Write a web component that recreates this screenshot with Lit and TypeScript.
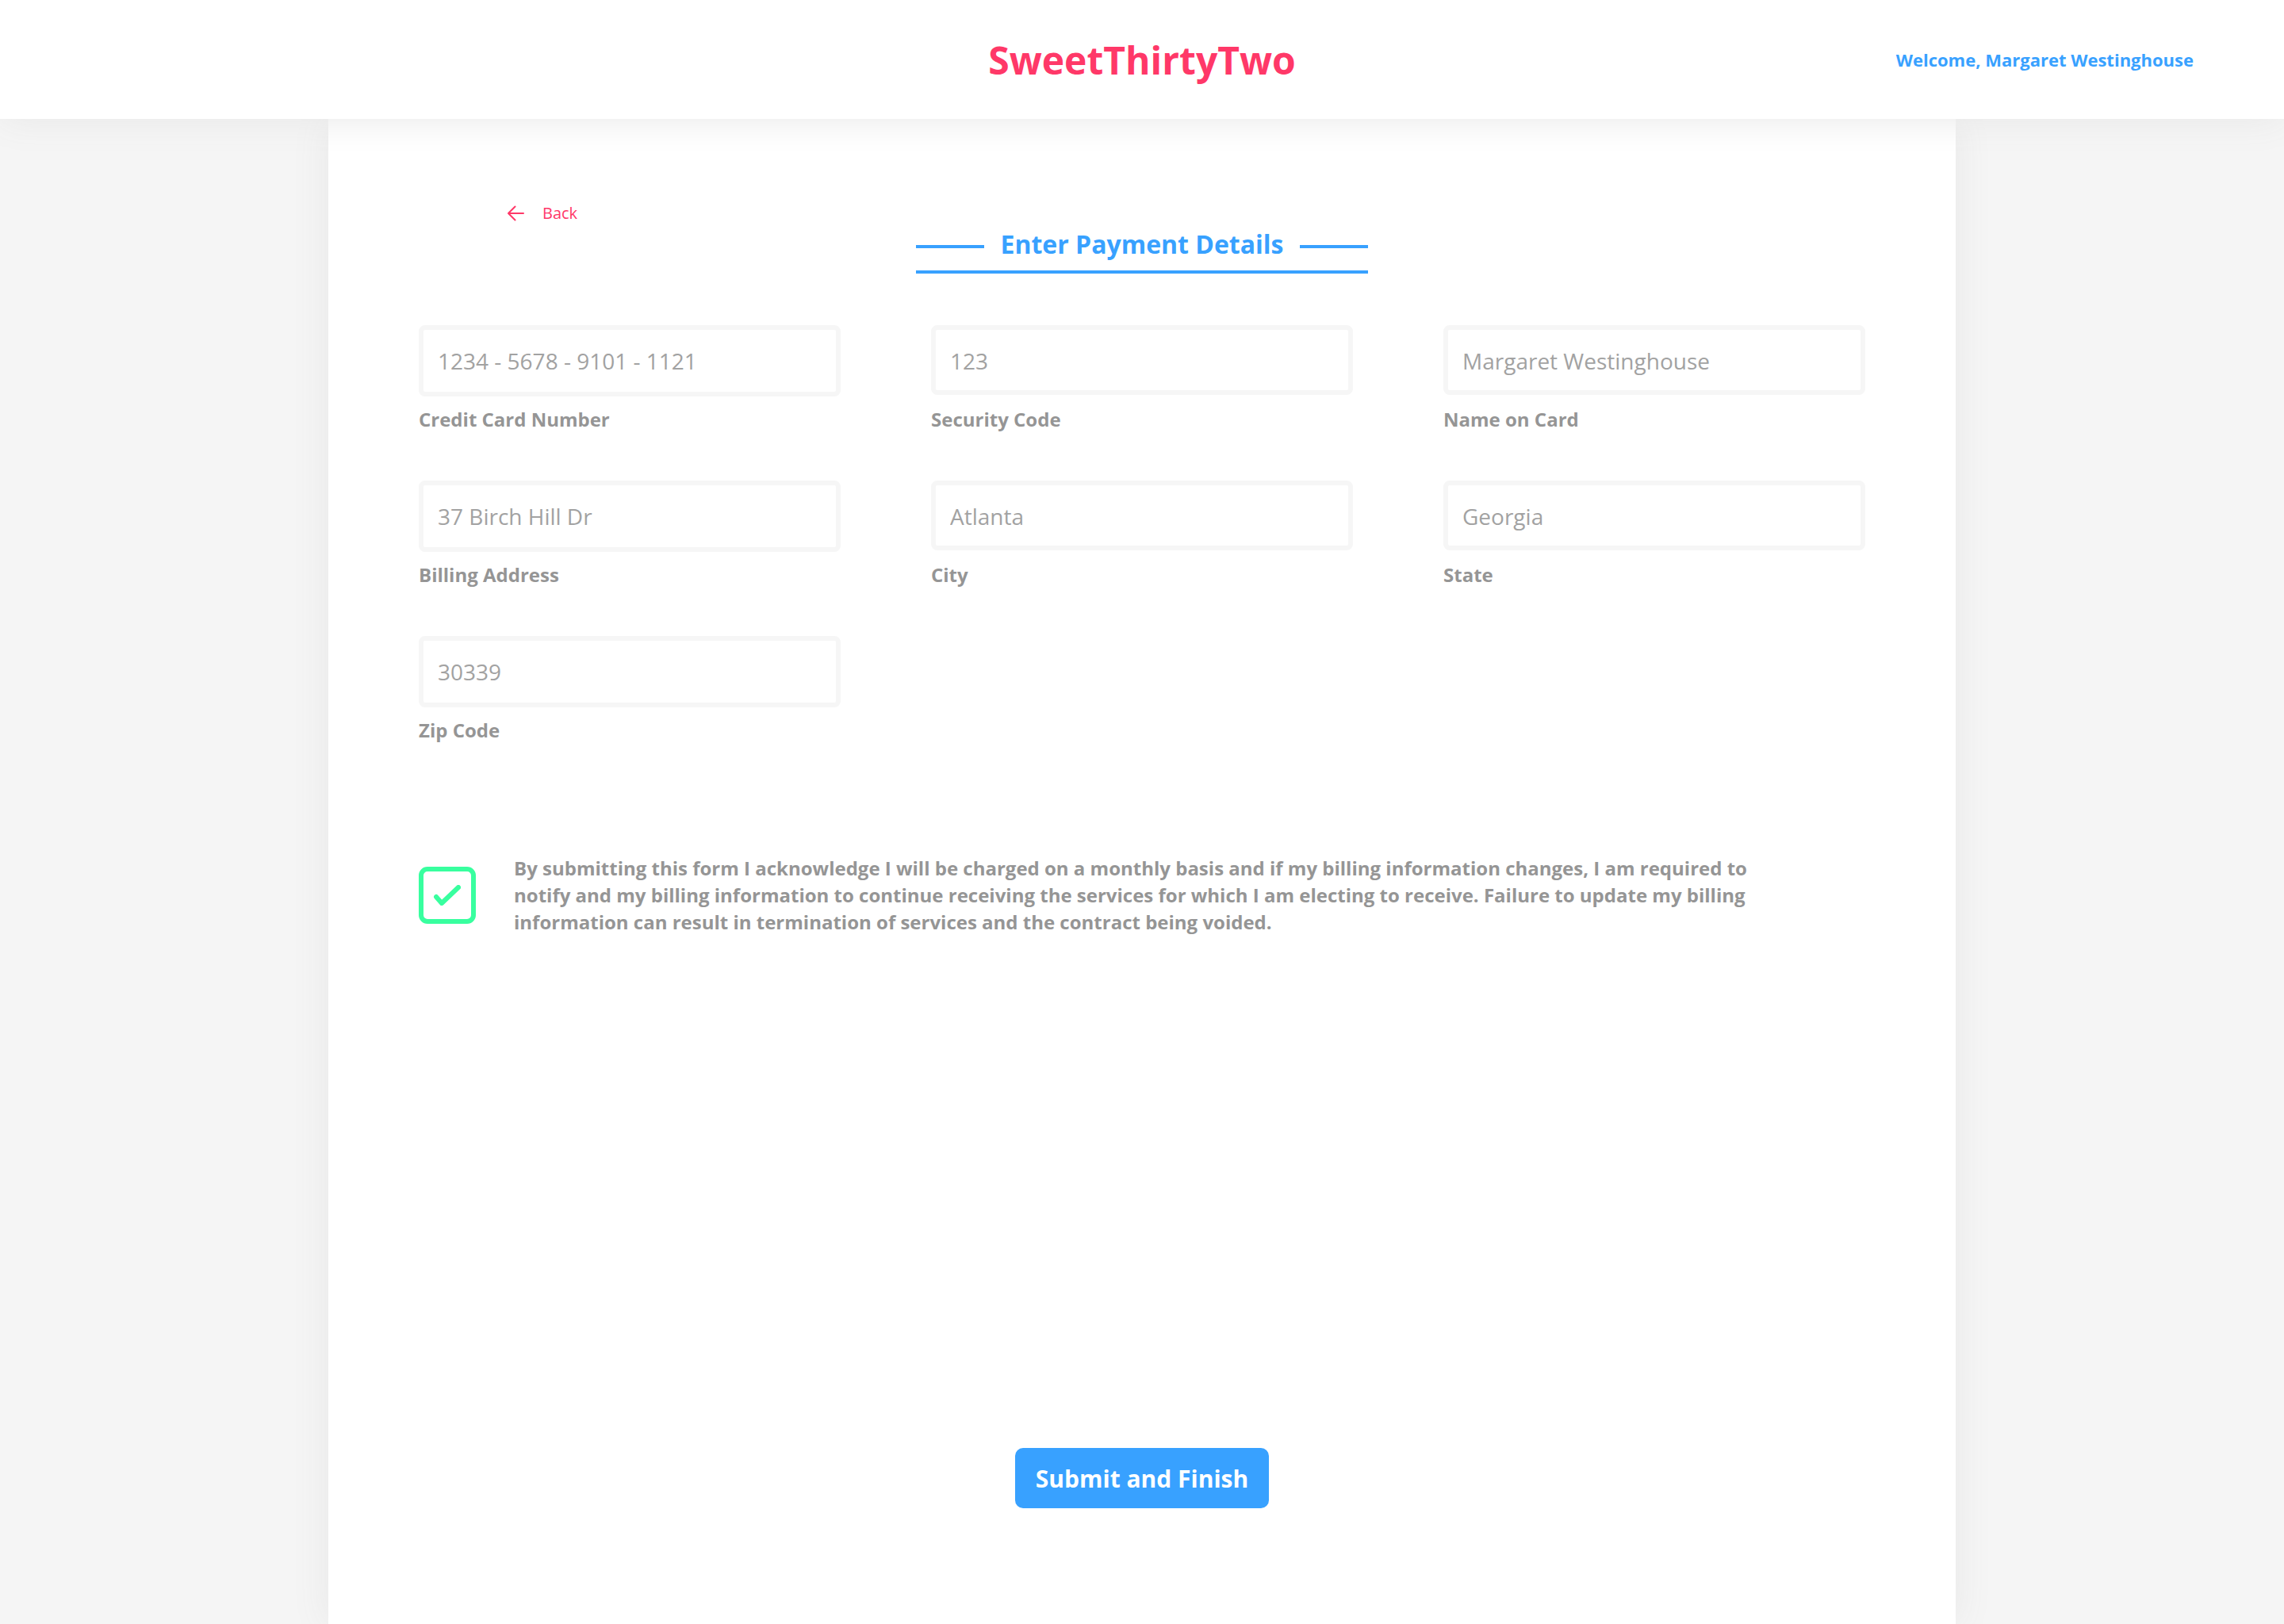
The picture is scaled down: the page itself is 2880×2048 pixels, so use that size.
import { LitElement, html, css, svg } from "lit";
import { customElement, state } from "lit/decorators.js";

interface Field {
  id: string;
  label: string;
  value: string;
}

const FIELDS: Field[] = [
  { id: "card-number", label: "Credit Card Number", value: "1234 - 5678 - 9101 - 1121" },
  { id: "security-code", label: "Security Code", value: "123" },
  { id: "card-name", label: "Name on Card", value: "Margaret Westinghouse" },
  { id: "address", label: "Billing Address", value: "37 Birch Hill Dr" },
  { id: "city", label: "City", value: "Atlanta" },
  { id: "state", label: "State", value: "Georgia" },
  { id: "zip", label: "Zip Code", value: "30339" },
];

const arrowShape = svg`<path d="M20 10H1.500M9.500 1.500L1 10L9.500 18.500" />`;
const checkShape = svg`<path d="M3 15L10 23L31 3" />`;

@customElement("app-root")
export class AppRoot extends LitElement {
  @state() private accepted = true;

  static styles = css`
    :host {
      display: flex;
      flex-direction: column;
      min-height: 100vh;
      background: #f5f5f5;
      color: #959595;
      font-family: "Open Sans", "Noto Sans", sans-serif;
      --pink: #ff3868;
      --blue: #38a1ff;
      --green: #38ff9f;
      --shade: 0 0 45px #e7e7e7;
    }
    * {
      box-sizing: border-box;
    }
    .topbar {
      position: relative;
      z-index: 1;
      display: grid;
      grid-template-columns: 1fr auto 1fr;
      align-items: center;
      min-height: 150px;
      padding: 0 114px;
      background: #ffffff;
      box-shadow: var(--shade);
    }
    .brand {
      grid-column: 2;
      margin: 0;
      padding-top: 2px;
      color: var(--pink);
      font-size: 48px;
      line-height: 66px;
      font-weight: 700;
    }
    .welcome {
      justify-self: end;
      color: var(--blue);
      font-size: 22px;
      line-height: 30px;
      font-weight: 700;
    }
    .card {
      flex: 1;
      display: flex;
      flex-direction: column;
      margin: 0 414px;
      padding: 105px 114px 146px;
      background: #ffffff;
      box-shadow: var(--shade);
    }
    .back {
      align-self: flex-start;
      display: flex;
      align-items: center;
      gap: 22px;
      margin: 0 0 3px 112px;
      color: var(--pink);
      font-size: 20px;
      line-height: 28px;
      text-decoration: none;
    }
    .arrow {
      width: 22px;
      height: 20px;
      fill: none;
      stroke: currentColor;
      stroke-width: 2;
      stroke-linecap: round;
      stroke-linejoin: round;
    }
    .title {
      align-self: center;
      display: flex;
      align-items: center;
      gap: 20px;
      width: 570px;
      margin: 0;
      padding-bottom: 11px;
      border-bottom: 4px solid var(--blue);
      color: var(--blue);
      font-size: 32px;
      line-height: 44px;
      font-weight: 700;
      white-space: nowrap;
    }
    .title::before,
    .title::after {
      content: "";
      flex: 1;
      height: 4px;
      margin-top: 6px;
      background: var(--blue);
    }
    .form {
      flex: 1;
      display: flex;
      flex-direction: column;
      margin-top: 65px;
    }
    .fields {
      display: grid;
      grid-template-columns: repeat(3, 1fr);
      gap: 60px 114px;
    }
    .field {
      display: flex;
      flex-direction: column;
      justify-content: space-between;
      min-height: 136px;
    }
    .input {
      width: 100%;
      height: 88px;
      padding: 20px 18px 18px;
      border: 6px solid #f6f6f6;
      border-radius: 8px;
      outline: none;
      background: #ffffff;
      color: #a2a2a2;
      font-family: inherit;
      font-size: 28px;
      line-height: 38px;
      font-weight: 400;
    }
    .field:nth-child(3n + 1) .input {
      height: 90px;
      padding-bottom: 20px;
    }
    .label,
    .terms {
      font-size: 24px;
      line-height: 34px;
      font-weight: 700;
    }
    .consent {
      display: flex;
      align-items: center;
      gap: 48px;
      margin-top: 140px;
      padding-right: 114px;
    }
    .tick {
      flex: none;
      display: grid;
      place-items: center;
      width: 72px;
      height: 72px;
    }
    .box,
    .mark {
      grid-area: 1 / 1;
    }
    .box {
      appearance: none;
      width: 100%;
      height: 100%;
      margin: 0;
      border: 6px solid var(--green);
      border-radius: 11px;
      background: #ffffff;
    }
    .mark {
      z-index: 1;
      width: 34px;
      height: 26px;
      fill: none;
      stroke: var(--green);
      stroke-width: 6;
      stroke-linecap: round;
      stroke-linejoin: round;
      pointer-events: none;
    }
    .submit {
      align-self: center;
      margin-top: auto;
      padding: 18px 26px 16px;
      border: 0;
      border-radius: 10px;
      background: var(--blue);
      color: #ffffff;
      font-family: inherit;
      font-size: 30px;
      line-height: 42px;
      font-weight: 700;
    }
  `;

  private toggle(event: Event) {
    this.accepted = (event.target as HTMLInputElement).checked;
  }

  private renderField(field: Field) {
    return html`
      <div class="field">
        <input class="input" id=${field.id} type="text" .value=${field.value} />
        <label class="label" for=${field.id}>${field.label}</label>
      </div>
    `;
  }

  render() {
    return html`
      <header class="topbar">
        <h1 class="brand">SweetThirtyTwo</h1>
        <span class="welcome">Welcome, Margaret Westinghouse</span>
      </header>
      <main class="card">
        <a class="back" href="#">
          <svg class="arrow" viewBox="0 0 22 20" aria-hidden="true">${arrowShape}</svg>
          Back
        </a>
        <h2 class="title">Enter Payment Details</h2>
        <form class="form" @submit=${(e: Event) => e.preventDefault()}>
          <div class="fields">${FIELDS.map((field) => this.renderField(field))}</div>
          <div class="consent">
            <span class="tick">
              <input class="box" id="terms" type="checkbox" .checked=${this.accepted} @change=${this.toggle} />
              ${this.accepted
                ? html`<svg class="mark" viewBox="0 0 34 26" aria-hidden="true">${checkShape}</svg>`
                : null}
            </span>
            <label class="terms" for="terms">
              By submitting this form I acknowledge I will be charged on a monthly basis and if my billing
              information changes, I am required to notify and my billing information to continue receiving the
              services for which I am electing to receive. Failure to update my billing information can result in
              termination of services and the contract being voided.
            </label>
          </div>
          <button class="submit" type="submit">Submit and Finish</button>
        </form>
      </main>
    `;
  }
}
